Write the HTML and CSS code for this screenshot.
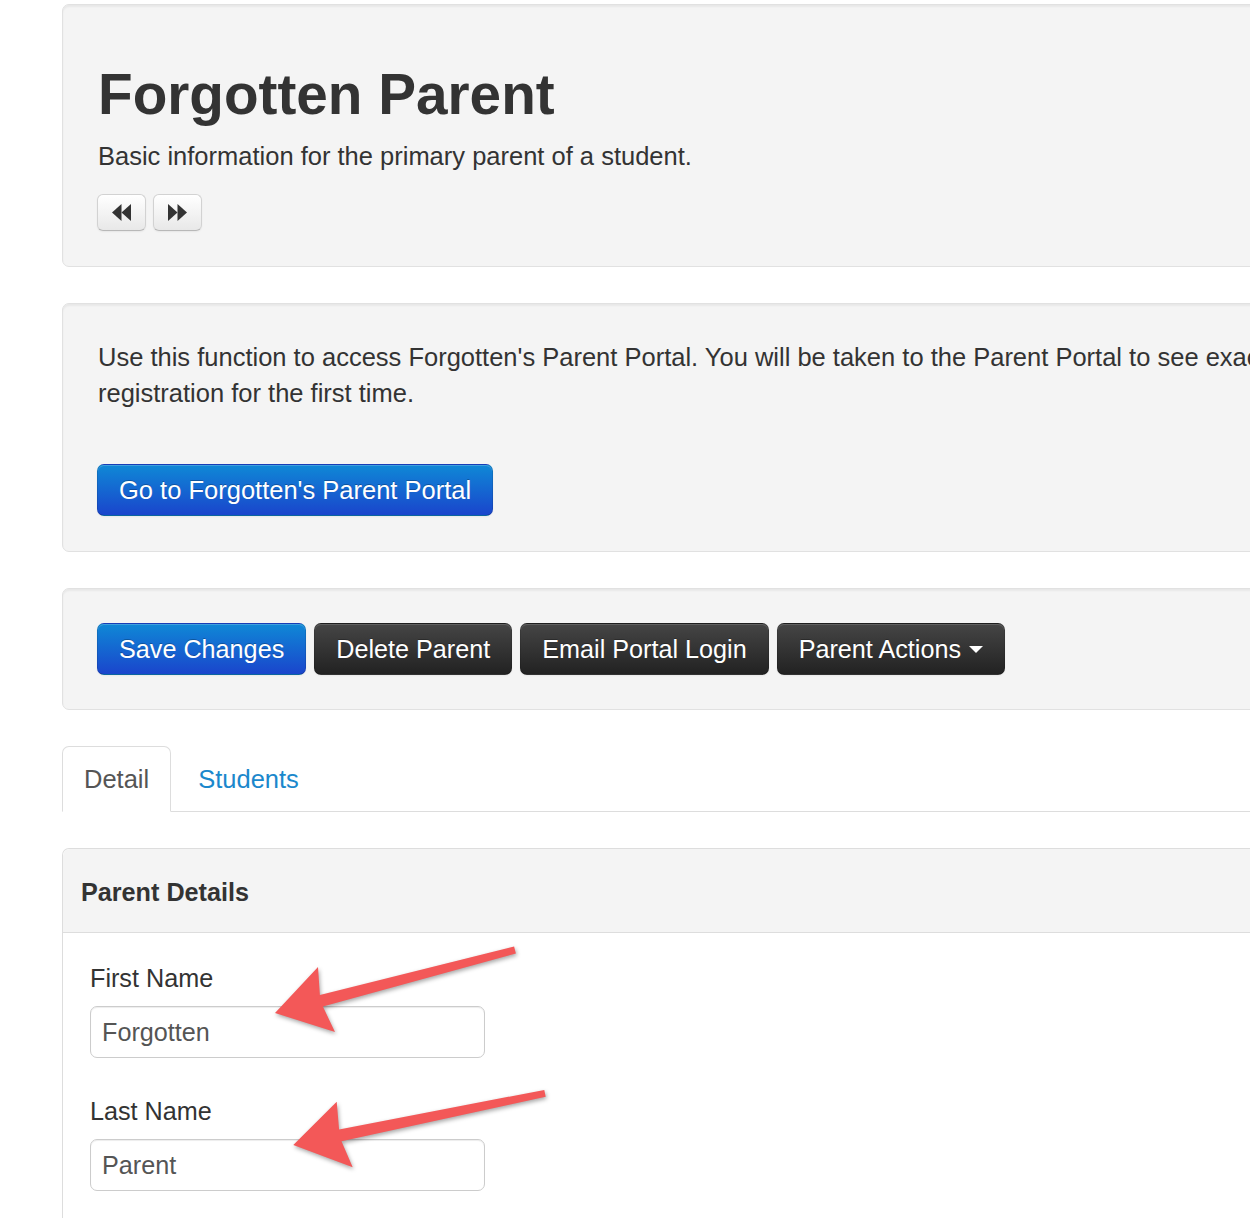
FILE: index.html
```html
<!DOCTYPE html>
<html lang="en">
<head>
<meta charset="utf-8">
<title>Forgotten Parent</title>
<link rel="stylesheet" href="styles.css">
</head>
<body>
<div class="page">
  <section class="well hero">
    <h1 class="title">Forgotten Parent</h1>
    <p class="lead">Basic information for the primary parent of a student.</p>
    <div class="pager">
      <button class="btn btn-default btn-icon" aria-label="Previous">
        <svg width="19" height="17" viewBox="0 0 19 17"><polygon points="9.5,0 0,8.5 9.5,17"/><polygon points="19,0 9.5,8.5 19,17"/></svg>
      </button>
      <button class="btn btn-default btn-icon" aria-label="Next">
        <svg width="19" height="17" viewBox="0 0 19 17"><polygon points="0,0 9.5,8.5 0,17"/><polygon points="9.5,0 19,8.5 9.5,17"/></svg>
      </button>
    </div>
  </section>

  <section class="well">
    <p class="intro">Use this function to access Forgotten's Parent Portal. You will be taken to the Parent Portal to see exactly what the parent sees when completing<br>registration for the first time.</p>
    <button class="btn btn-primary portal-btn">Go to Forgotten's Parent Portal</button>
  </section>

  <section class="well actions">
    <button class="btn btn-primary">Save Changes</button>
    <button class="btn btn-inverse">Delete Parent</button>
    <button class="btn btn-inverse">Email Portal Login</button>
    <button class="btn btn-inverse">Parent Actions<span class="caret"></span></button>
  </section>

  <ul class="tabs">
    <li class="tab active"><a>Detail</a></li>
    <li class="tab"><a class="link">Students</a></li>
  </ul>

  <section class="panel">
    <div class="panel-heading">Parent Details</div>
    <div class="panel-body">
      <div class="field">
        <label class="label" for="first">First Name</label>
        <input class="input" id="first" type="text" value="Forgotten">
      </div>
      <div class="field">
        <label class="label" for="last">Last Name</label>
        <input class="input" id="last" type="text" value="Parent">
      </div>
    </div>
  </section>
</div>

<svg class="annotations" width="1250" height="1218" viewBox="0 0 1250 1218">
  <polygon class="arrow" points="275,1013 318,967 319.9,995 514.1,946.6 515.9,953.4 322.9,1006.6 335,1032"/>
  <polygon class="arrow" points="293.3,1145 336.7,1101.7 339.1,1129.4 544.3,1089.9 545.7,1096.7 341.5,1141.2 352.7,1167.3"/>
</svg>
</body>
</html>
```

FILE: styles.css
```css
html, body {
  margin: 0;
  padding: 0;
  overflow: hidden;
  background: #fff;
}

body {
  position: relative;
  width: 1250px;
  height: 1218px;
  font-family: "Liberation Sans", Arial, Helvetica, sans-serif;
  font-size: 25.5px;
  line-height: 36px;
  color: #333;
}

.page {
  margin-left: 62px;
  padding-top: 4px;
  width: 1800px;
}

.well {
  background: #f4f4f4;
  border: 1px solid #e1e1e1;
  border-radius: 7px;
  box-shadow: inset 0 2px 2px rgba(0, 0, 0, 0.05);
  padding: 35px 35px;
  margin-bottom: 36px;
}

.title {
  margin: 23px 0 0;
  font-size: 56.7px;
  line-height: 64px;
  font-weight: bold;
  color: #333;
}

.lead {
  margin: 11px 0 0;
}

.pager {
  display: flex;
  gap: 7px;
  margin-top: 20px;
  margin-left: -1px;
}

.btn {
  font-family: "Liberation Sans", Arial, Helvetica, sans-serif;
  font-size: 25.2px;
  line-height: 36px;
  padding: 7px 21px;
  border-radius: 7px;
  border: 1px solid rgba(0, 0, 0, 0.1);
  border-bottom-color: rgba(0, 0, 0, 0.25);
  cursor: pointer;
  display: inline-flex;
  align-items: center;
}

.btn-default {
  background: linear-gradient(#ffffff, #e8e8e8);
  border-color: #d2d2d2;
  border-bottom-color: #b8b8b8;
  box-shadow: inset 0 1px 0 rgba(255, 255, 255, 0.3), 0 1px 2px rgba(0, 0, 0, 0.06);
}

.btn-icon {
  width: 49px;
  height: 37px;
  padding: 0;
  justify-content: center;
  border-radius: 6px;
}

.btn-icon svg {
  fill: #333;
}

.btn-primary {
  color: #fff;
  background: linear-gradient(#0f88d6, #1a45cc);
  text-shadow: 0 -1px 0 rgba(0, 0, 0, 0.25);
  box-shadow: inset 0 1px 0 rgba(255, 255, 255, 0.2), 0 1px 2px rgba(0, 0, 0, 0.05);
}

.btn-inverse {
  color: #fff;
  background: linear-gradient(#454545, #222222);
  text-shadow: 0 -1px 0 rgba(0, 0, 0, 0.25);
  box-shadow: inset 0 1px 0 rgba(255, 255, 255, 0.15), 0 1px 2px rgba(0, 0, 0, 0.05);
}

.intro {
  margin: 0;
}

.portal-btn {
  margin-top: 53px;
  margin-left: -1px;
  font-size: 25.5px;
}

.actions {
  display: flex;
  gap: 8px;
  padding: 34px 35px 34px 34px;
}

.caret {
  display: inline-block;
  width: 0;
  height: 0;
  margin-left: 8px;
  border-top: 7px solid #fff;
  border-left: 7px solid transparent;
  border-right: 7px solid transparent;
}

.tabs {
  display: flex;
  list-style: none;
  margin: 0 0 36px;
  padding: 0;
  border-bottom: 1px solid #dddddd;
}

.tab {
  margin-bottom: -1px;
  margin-right: 5px;
}

.tab a {
  display: block;
  padding: 14px 21px;
  line-height: 36px;
  border: 1px solid transparent;
  border-radius: 7px 7px 0 0;
}

.tab.active a {
  background: #fff;
  color: #555;
  border-color: #dddddd #dddddd transparent;
}

.link {
  color: #1b88cc;
}

.panel {
  border: 1px solid #dddddd;
  border-bottom: none;
  border-radius: 7px 7px 0 0;
}

.panel-heading {
  background: #f4f4f4;
  border-bottom: 1px solid #dddddd;
  border-radius: 7px 7px 0 0;
  padding: 25px 18px 22px;
  font-size: 25.2px;
  font-weight: bold;
}

.panel-body {
  padding: 27px 27px 200px;
}

.field {
  margin-bottom: 35px;
}

.label {
  display: block;
  font-size: 25.2px;
  line-height: 36px;
  margin-bottom: 10px;
}

.input {
  display: block;
  box-sizing: border-box;
  width: 395px;
  height: 52px;
  padding: 0 11px;
  border: 1px solid #cccccc;
  border-radius: 7px;
  box-shadow: inset 0 1px 1px rgba(0, 0, 0, 0.075);
  font-family: "Liberation Sans", Arial, Helvetica, sans-serif;
  font-size: 25.2px;
  color: #555;
  background: #fff;
}

.annotations {
  position: absolute;
  left: 0;
  top: 0;
  pointer-events: none;
}

.arrow {
  fill: #f35858;
  filter: drop-shadow(1px 2px 2px rgba(0, 0, 0, 0.35));
}
```
